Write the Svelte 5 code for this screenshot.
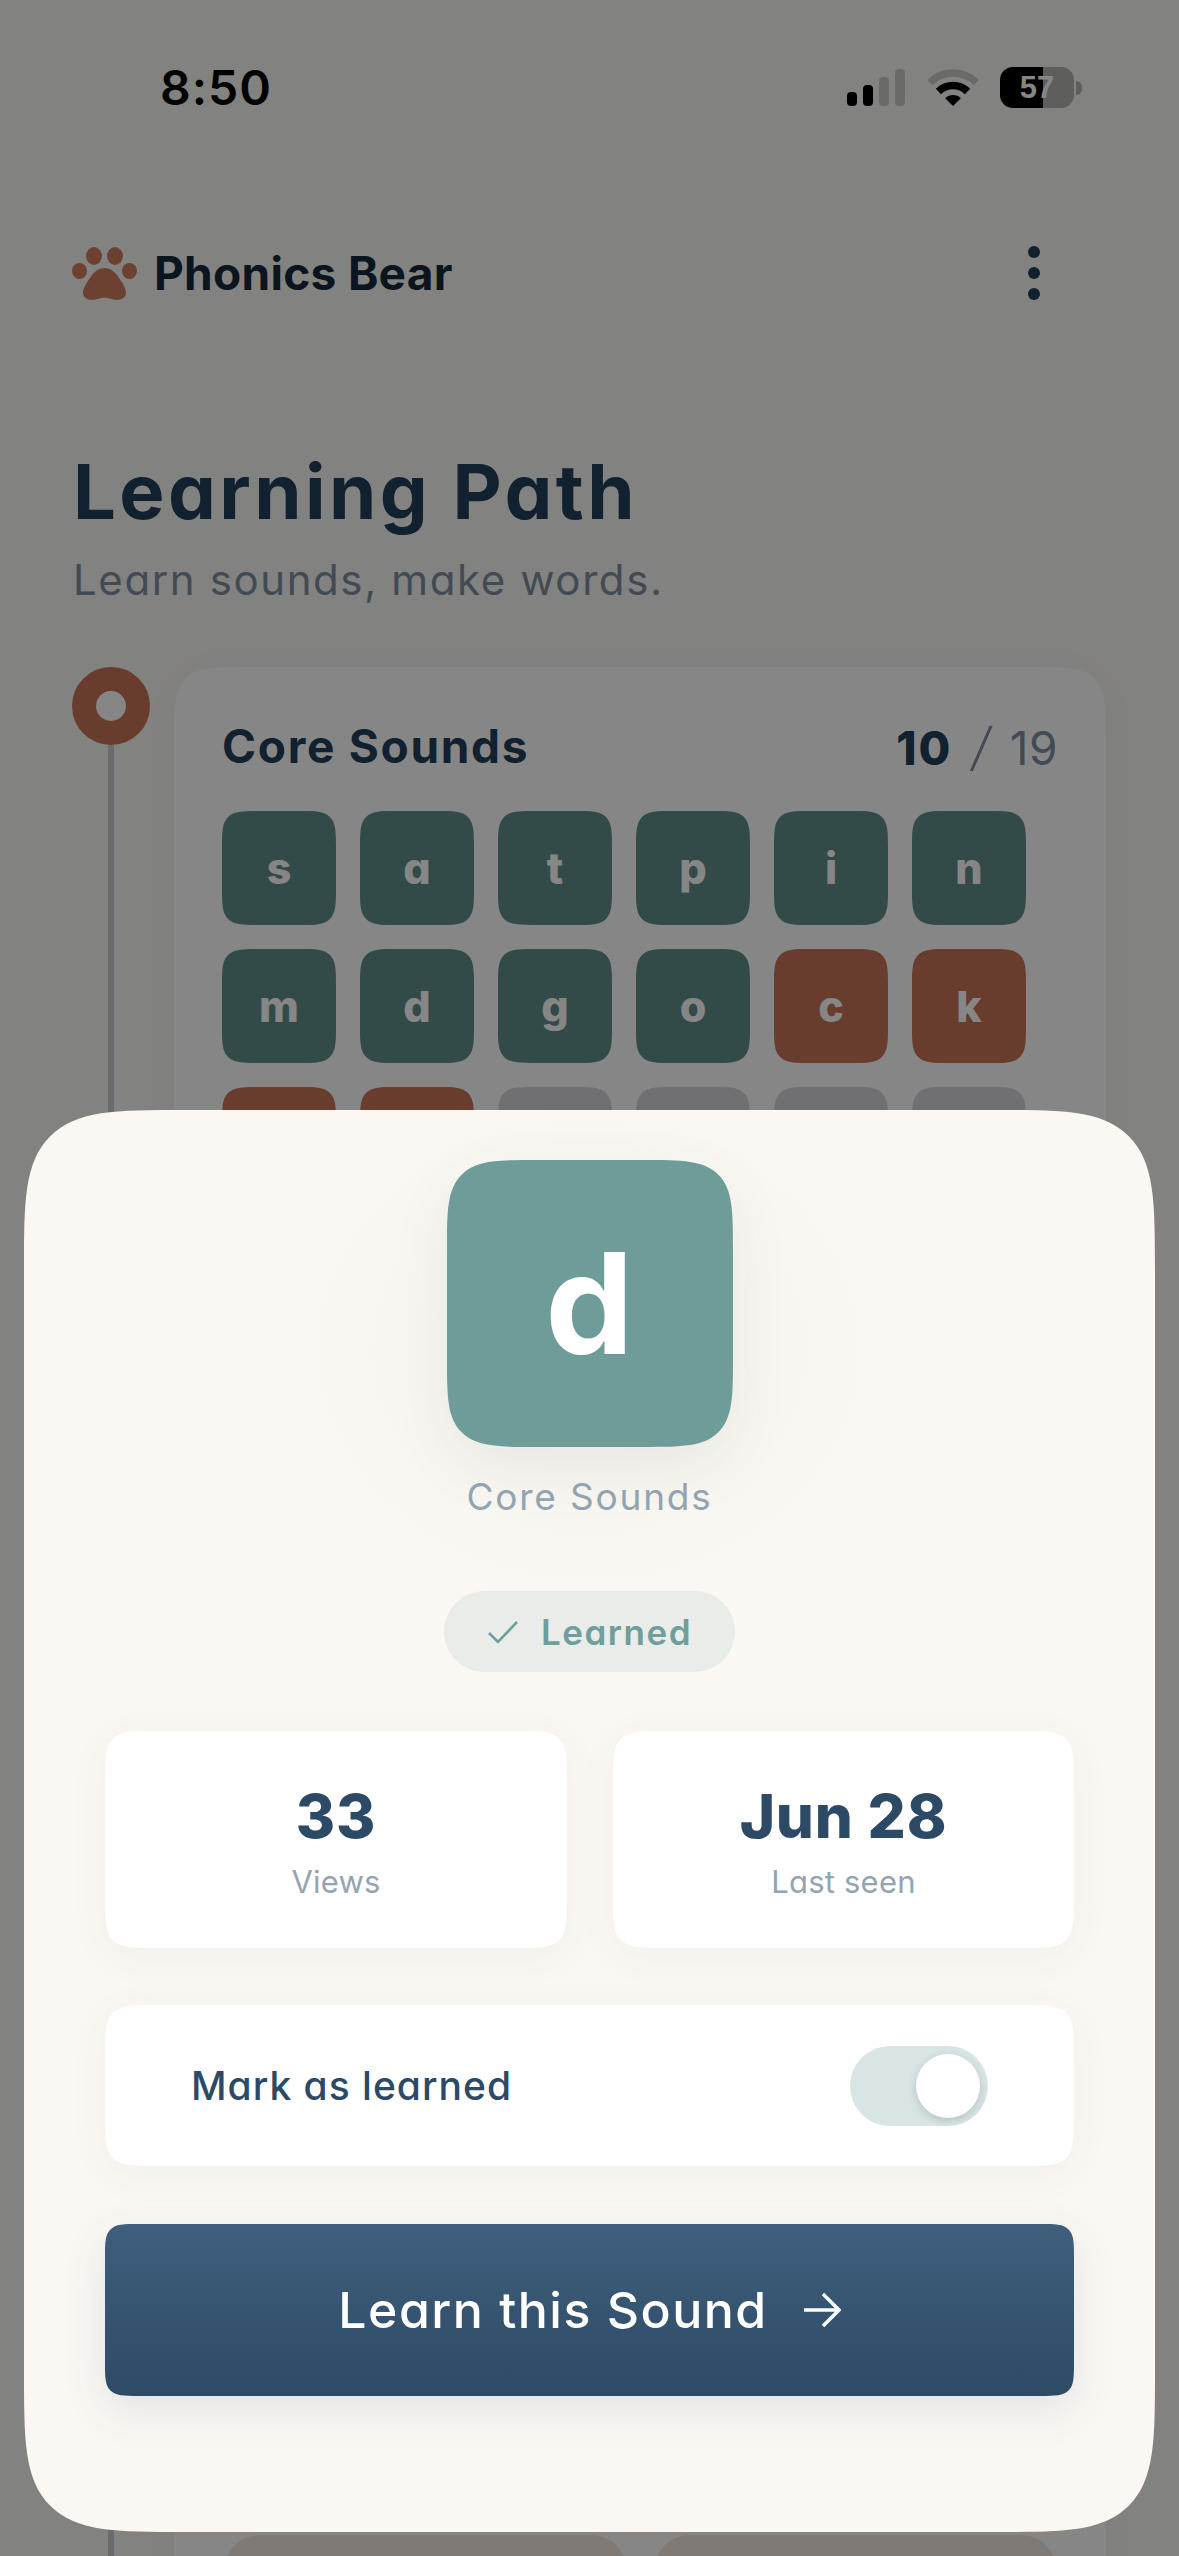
<script>
  const sounds = [
    ['s','l'],['a','l'],['t','l'],['p','l'],['i','l'],['n','l'],
    ['m','l'],['d','l'],['g','l'],['o','l'],['c','p'],['k','p'],
    ['e','p'],['u','p'],['r','n'],['h','n'],['b','n'],['f','n'],['l','n']
  ];
</script>

<div class="phone">
  <div class="page">
    <div class="status">
      <span class="time">8:50</span>
      <div class="status-icons">
        <div class="signal">
          <i class="b1"></i><i class="b2"></i><i class="b3 dim"></i><i class="b4 dim"></i>
        </div>
        <svg class="wifi" width="50" height="37" viewBox="0 0 50 37" aria-hidden="true">
          <path d="M1.7 13.7A33 33 0 0 1 48.3 13.7" fill="none" stroke="#cacac6" stroke-width="7.5"/>
          <path d="M10.5 22.5A20.5 20.5 0 0 1 39.5 22.5" fill="none" stroke="#000" stroke-width="7.5"/>
          <path d="M25 37L17.2 29.2A11 11 0 0 1 32.8 29.2Z" fill="#000"/>
        </svg>
        <div class="battery"><span>57</span></div>
        <i class="nub"></i>
      </div>
    </div>

    <header class="top">
      <div class="brand">
        <svg width="65" height="53" viewBox="0 0 65 53" aria-hidden="true">
          <g fill="#d07c60">
            <ellipse cx="22" cy="9" rx="8" ry="9"/>
            <ellipse cx="43" cy="9" rx="8" ry="9"/>
            <ellipse cx="7.5" cy="24" rx="7.5" ry="8"/>
            <ellipse cx="57.5" cy="24" rx="7.5" ry="8"/>
            <path d="M32.5 21C25 21 20 27 16 34C12 40 11 43 11 46C11 50 15 53 20 53C25 53 28 50.5 32.5 50.5C37 50.5 40 53 45 53C50 53 54 50 54 46C54 43 53 40 49 34C45 27 40 21 32.5 21Z"/>
          </g>
        </svg>
        <span class="brand-name">Phonics Bear</span>
      </div>
      <div class="dots"><i></i><i></i><i></i></div>
    </header>

    <h1>Learning Path</h1>
    <p class="sub">Learn sounds, make words.</p>

    <div class="path">
      <div class="rail">
        <div class="node"></div>
        <div class="line"></div>
      </div>
      <section class="card">
        <div class="card-head">
          <h2>Core Sounds</h2>
          <div class="count"><b>10</b> <em>/</em> 19</div>
        </div>
        <div class="grid">
          {#each sounds as [ch, st]}
            <div class="tile {st}">{ch}</div>
          {/each}
        </div>
        <div class="words">
          <div class="word"></div>
          <div class="word"></div>
        </div>
      </section>
    </div>
  </div>

  <div class="scrim"></div>

  <div class="sheet">
    <div class="glow"></div>
    <div class="big-tile">d</div>
    <div class="group">Core Sounds</div>
    <div class="pill">
      <svg width="32" height="24" viewBox="0 0 32 24" aria-hidden="true">
        <path d="M2 13L11 22L30 2" fill="none" stroke="#6f9f9c" stroke-width="2.6"/>
      </svg>
      <span>Learned</span>
    </div>
    <div class="stats">
      <div class="stat"><strong>33</strong><span>Views</span></div>
      <div class="stat"><strong>Jun 28</strong><span>Last seen</span></div>
    </div>
    <div class="mark">
      <span>Mark as learned</span>
      <div class="toggle"><i></i></div>
    </div>
    <button class="cta">
      <span>Learn this Sound</span>
      <svg width="38" height="36" viewBox="0 0 38 36" aria-hidden="true">
        <path d="M1 18H36M20 2L36 18L20 34" fill="none" stroke="#fff" stroke-width="3.4"/>
      </svg>
    </button>
  </div>
</div>

<style>
  :global(body) { margin: 0; background: #828280; }
  .phone {
    position: relative;
    width: 1179px;
    height: 2556px;
    overflow: hidden;
    background: #f8f7f4;
    font-family: Inter, "Noto Sans", sans-serif;
    font-feature-settings: "cv11";
  }
  .page { display: flex; flex-direction: column; height: 100%; }

  .status {
    display: flex;
    justify-content: space-between;
    align-items: center;
    height: 41px;
    margin-top: 67px;
    padding: 0 97px 0 160px;
  }
  .time { font-size: 48px; font-weight: 600; color: #000; letter-spacing: 1px; font-feature-settings: normal; }
  .status-icons { display: flex; align-items: center; }
  .signal { display: flex; align-items: flex-end; gap: 6px; height: 37px; margin-right: 23px; }
  .signal i { width: 10px; border-radius: 4px; background: #000; display: block; }
  .signal .b1 { height: 14px; }
  .signal .b2 { height: 21px; }
  .signal .b3 { height: 29px; }
  .signal .b4 { height: 37px; }
  .signal .dim { background: #cacac6; }
  .wifi { margin-right: 22px; display: block; }
  .battery {
    width: 74px;
    height: 41px;
    border-radius: 13px;
    background: linear-gradient(90deg, #000 58%, #b3b3af 58%);
    display: flex;
    align-items: center;
    justify-content: center;
    color: #fff;
    font: 700 31px "Liberation Sans", sans-serif;
  }
  .nub { width: 6px; height: 14px; margin-left: 2px; border-radius: 0 7px 7px 0; background: #b3b3af; display: block; }

  .top {
    display: flex;
    justify-content: space-between;
    align-items: center;
    margin-top: 138px;
    padding: 0 139px 0 72px;
    height: 54px;
  }
  .brand { display: flex; align-items: center; gap: 17px; }
  .brand-name {
    font-size: 46px;
    font-weight: 700;
    color: #14293c;
    letter-spacing: 0.3px;
    font-feature-settings: normal;
  }
  .dots { display: flex; flex-direction: column; gap: 9px; }
  .dots i { width: 12px; height: 12px; border-radius: 50%; background: #243f5a; display: block; }

  h1 {
    margin: 151px 0 0 73px;
    font-size: 76px;
    line-height: 80px;
    font-weight: 700;
    letter-spacing: 3.4px;
    color: #243f5a;
  }
  .sub {
    margin: 24px 0 0 73px;
    font-size: 42px;
    line-height: 50px;
    font-weight: 400;
    letter-spacing: 1.6px;
    color: #7f8f9f;
  }

  .path { display: flex; margin-top: 62px; padding-left: 72px; flex: 1; min-height: 0; }
  .rail { width: 78px; display: flex; flex-direction: column; align-items: center; margin-right: 24px; }
  .node { width: 30px; height: 30px; border: 24px solid #c67459; border-radius: 50%; background: #fff; flex: none; }
  .line { width: 6px; flex: 1; background: #c6cdd2; }

  .card {
    width: 932px;
    height: 2200px;
    padding: 48px;
    box-sizing: border-box;
    background: #fff;
    border-radius: 72px;
    corner-shape: squircle;
    box-shadow: 0 4px 40px rgba(0,0,0,.03);
  }
  .card-head { display: flex; justify-content: space-between; align-items: center; height: 62px; margin-bottom: -2px; }
  h2 { margin: 0; font-size: 46px; font-weight: 700; letter-spacing: 1.7px; color: #243f5a; }
  .count { font-size: 46px; font-weight: 400; color: #7f8f9f; letter-spacing: 0.5px; }
  .count b { font-weight: 800; letter-spacing: 2px; color: #243f5a; }
  .count em { font-size: 52px; font-style: italic; font-weight: 300; padding: 0 6px; }
  .grid {
    display: grid;
    grid-template-columns: repeat(6, 114px);
    grid-auto-rows: 114px;
    gap: 24px;
    margin-top: 36px;
  }
  .tile {
    border-radius: 38px;
    corner-shape: squircle;
    display: flex;
    align-items: center;
    justify-content: center;
    font-size: 43px;
    font-weight: 800;
    color: #fff;
  }
  .tile.l { background: #5f8f8b; }
  .tile.p { background: #c67459; }
  .tile.n { background: #d6d6da; }

  .words { display: grid; grid-template-columns: 403px 403px; gap: 27px; margin: 1196px 0 0 2px; }
  .word { height: 160px; border-radius: 36px; background: #f2e8e0; }

  .scrim { position: absolute; inset: 0; background: rgba(0,0,0,.475); }

  .sheet {
    position: absolute;
    left: 24px;
    top: 1110px;
    width: 1131px;
    height: 1422px;
    box-sizing: border-box;
    padding: 50px 81px 0;
    background: #fbf8f3;
    border-radius: 165px;
    corner-shape: squircle;
    display: flex;
    flex-direction: column;
    align-items: center;
  }
  .glow {
    position: absolute;
    left: 270px;
    top: -10px;
    width: 590px;
    height: 500px;
    border-radius: 50%;
    background: radial-gradient(closest-side, rgba(110,156,153,.05), rgba(110,156,153,.015) 75%, transparent);
  }
  .big-tile {
    position: relative;
    width: 286px;
    height: 287px;
    flex: none;
    border-radius: 92px;
    corner-shape: squircle;
    background: #6e9c99;
    color: #fff;
    font-size: 140px;
    line-height: 287px;
    font-weight: 700;
    text-align: center;
    box-shadow: 0 20px 60px rgba(60,80,70,.08);
  }
  .group { position: relative; margin-top: 28px; font-size: 37px; line-height: 44px; letter-spacing: 1.8px; color: #94a3b2; }
  .pill {
    position: relative;
    margin-top: 72px;
    height: 81px;
    width: 291px;
    flex: none;
    border-radius: 41px;
    background: #e9ece8;
    display: flex;
    align-items: center;
    justify-content: center;
    gap: 22px;
    color: #6f9f9c;
    font-size: 35px;
    font-weight: 600;
    letter-spacing: 1.5px;
  }
  .stats { display: grid; grid-template-columns: 462px 461px; gap: 46px; margin-top: 59px; width: 100%; }
  .stat {
    height: 217px;
    padding-top: 2px;
    box-sizing: border-box;
    background: #fff;
    border-radius: 50px;
    corner-shape: squircle;
    box-shadow: 0 8px 40px rgba(60,70,80,.05);
    display: flex;
    flex-direction: column;
    align-items: center;
    justify-content: center;
  }
  .stat strong { font-size: 60px; line-height: 72px; font-weight: 800; letter-spacing: 0.8px; color: #2c4a66; }
  .stat span { margin-top: 10px; font-size: 31px; line-height: 40px; letter-spacing: 0.2px; color: #94a3b2; }
  .mark {
    margin-top: 57px;
    width: 100%;
    height: 161px;
    flex: none;
    box-sizing: border-box;
    padding: 0 86px;
    background: #fff;
    border-radius: 50px;
    corner-shape: squircle;
    box-shadow: 0 8px 40px rgba(60,70,80,.05);
    display: flex;
    align-items: center;
    justify-content: space-between;
    font-size: 39px;
    font-weight: 500;
    letter-spacing: 1px;
    color: #2c4a66;
  }
  .toggle {
    position: relative;
    width: 138px;
    height: 80px;
    border-radius: 40px;
    background: #d8e5e4;
  }
  .toggle i {
    position: absolute;
    right: 8px;
    top: 8px;
    width: 64px;
    height: 64px;
    border-radius: 50%;
    background: #fff;
    box-shadow: 0 3px 8px rgba(40,60,60,.2);
  }
  .cta {
    margin-top: 58px;
    width: 100%;
    height: 172px;
    flex: none;
    border: 0;
    border-radius: 34px;
    corner-shape: squircle;
    background: linear-gradient(180deg, #3f5f7c, #2d4a66);
    box-shadow: 0 14px 44px rgba(44,74,102,.12);
    display: flex;
    align-items: center;
    justify-content: center;
    gap: 35px;
    color: #fff;
    font: 500 50px Inter, "Noto Sans", sans-serif;
    font-feature-settings: "cv11";
    letter-spacing: 1.5px;
  }
  .cta svg { display: block; }
</style>
